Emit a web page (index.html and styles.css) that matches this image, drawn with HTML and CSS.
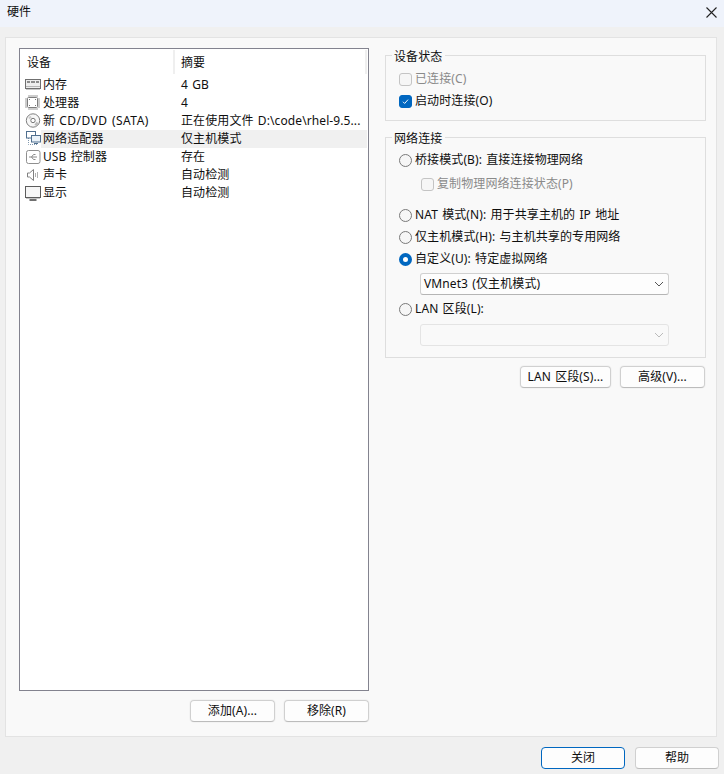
FILE: index.html
```html
<!DOCTYPE html>
<html lang="zh">
<head>
<meta charset="utf-8">
<title>硬件</title>
<link rel="stylesheet" href="styles.css">
</head>
<body>
<div class="window">
  <header class="titlebar">
    <span>硬件</span>
    <svg class="close-x" viewBox="0 0 11 11"><path d="M.5.5l10 10M10.500.5l-10 10"/></svg>
  </header>
  <main class="panel">
    <section class="left">
      <div class="list">
        <div class="head"><span class="h1">设备</span><span class="h2">摘要</span></div>
        <div class="row">
          <svg class="ico" viewBox="0 0 16 18"><rect x=".5" y="3.500" width="15" height="9" fill="#ededed" stroke="#6f6f6f"/><path d="M2 6h3M6 6h4M11 6h3" stroke="#8c8c8c" stroke-width="2"/><path d="M1 10.500h14" stroke="#b5b5b5"/><path d="M1 13.500h14" stroke="#c8c8c8"/></svg>
          <span class="name">内存</span><span class="sum">4 GB</span>
        </div>
        <div class="row">
          <svg class="ico" viewBox="0 0 16 18"><rect x="2.500" y="3.500" width="10" height="10" rx="1" fill="#fff" stroke="#7d7d7d"/><path d="M4 1v2M6 1v2M8 1v2M10 1v2M12 1v2M4 14v2M6 14v2M8 14v2M10 14v2M12 14v2M0 5h2M0 7h2M0 9h2M0 11h2M0 13h2M13 5h2M13 7h2M13 9h2M13 11h2M13 13h2" stroke="#9a9a9a"/><path d="M4 5h1v1H4zM10 11h1v1h-1zM4 11h1v1H4zM10 5h1v1h-1z" fill="#777"/></svg>
          <span class="name">处理器</span><span class="sum">4</span>
        </div>
        <div class="row">
          <svg class="ico" viewBox="0 0 16 18"><circle cx="8" cy="8.500" r="6.700" fill="#f7f7f7" stroke="#808080"/><path d="M10.500 13.500l2-3" stroke="#bbb" stroke-width="2.500"/><path d="M4 6.500l2-2" stroke="#ccc" stroke-width="2"/><circle cx="8" cy="8.500" r="2.200" fill="#fff" stroke="#777"/></svg>
          <span class="name">新 <span class="wide-latin">CD/DVD (SATA)</span></span><span class="sum">正在使用文件 D:\code\rhel-9.5...</span>
        </div>
        <div class="row selected">
          <svg class="ico" viewBox="0 0 16 18"><path d="M3.500 8v6.500h9" fill="none" stroke="#7f97ad" stroke-dasharray="1 1"/><rect x="1.500" y="1.500" width="9" height="6.500" fill="#fff" stroke="#4f6f8f"/><rect x="6.500" y="5.500" width="9" height="6.500" fill="#eaf2f9" stroke="#4f6f8f"/><path d="M9 13.500h4" stroke="#4f6f8f"/></svg>
          <span class="name">网络适配器</span><span class="sum">仅主机模式</span>
        </div>
        <div class="row">
          <svg class="ico" viewBox="0 0 16 18"><rect x="1.500" y="2.500" width="13.500" height="13" rx="2" fill="#fff" stroke="#8f8f8f"/><path d="M4 9h8M6.500 9l2-2.500h2M6.500 9l2 2.500h2" fill="none" stroke="#8a8a8a"/></svg>
          <span class="name">USB 控制器</span><span class="sum">存在</span>
        </div>
        <div class="row">
          <svg class="ico" viewBox="0 0 16 18"><path d="M2.500 7v4h2l4 3.500v-11l-4 3.500z" fill="#fff" stroke="#808080"/><path d="M10.500 7v4M12.500 6v6" stroke="#b0b0b0"/></svg>
          <span class="name">声卡</span><span class="sum">自动检测</span>
        </div>
        <div class="row">
          <svg class="ico" viewBox="0 0 16 18"><rect x=".5" y="2.500" width="15" height="11" fill="#f6f6f6" stroke="#5c5c5c"/><path d="M1 14.500h14" stroke="#c4c4c4"/><path d="M4.500 16h7" stroke="#6f6f6f" stroke-width="2"/></svg>
          <span class="name">显示</span><span class="sum">自动检测</span>
        </div>
      </div>
      <div class="actions list-actions">
        <button class="btn wide">添加(A)...</button>
        <button class="btn wide">移除(R)</button>
      </div>
    </section>
    <section class="right">
      <fieldset class="group status">
        <legend>设备状态</legend>
        <label class="opt disabled"><span class="box"></span>已连接(C)</label>
        <label class="opt"><span class="box checked"><svg viewBox="0 0 13 13"><path d="M3.500 6.800l2 2 4-4.500"/></svg></span>启动时连接(O)</label>
      </fieldset>
      <fieldset class="group net">
        <legend>网络连接</legend>
        <label class="opt"><span class="radio"></span>桥接模式(B): 直接连接物理网络</label>
        <label class="opt sub disabled"><span class="box"></span>复制物理网络连接状态(P)</label>
        <label class="opt gap"><span class="radio"></span>NAT 模式(N): 用于共享主机的 IP 地址</label>
        <label class="opt"><span class="radio"></span>仅主机模式(H): 与主机共享的专用网络</label>
        <label class="opt"><span class="radio on"></span>自定义(U): 特定虚拟网络</label>
        <div class="select"><span>VMnet3 (仅主机模式)</span><svg viewBox="0 0 10 6"><path d="M1 1l4 4 4-4"/></svg></div>
        <label class="opt"><span class="radio"></span>LAN 区段(L):</label>
        <div class="select off"><span></span><svg viewBox="0 0 10 6"><path d="M1 1l4 4 4-4"/></svg></div>
      </fieldset>
      <div class="actions right-actions">
        <button class="btn lan">LAN 区段(S)...</button>
        <button class="btn adv">高级(V)...</button>
      </div>
    </section>
  </main>
  <footer class="footer">
    <button class="btn close">关闭</button>
    <button class="btn close plain">帮助</button>
  </footer>
</div>
</body>
</html>
```
FILE: styles.css
```css
* { box-sizing: border-box; }
html, body { margin: 0; height: 100%; }
body {
  font: 12px/18px "Noto Sans", "Noto Sans CJK SC", sans-serif;
  color: #0f0f0f;
  background: #f0f0f0;
  word-spacing: 1px;
  letter-spacing: .1px;
}
.window { width: 724px; height: 774px; display: flex; flex-direction: column; overflow: hidden; }
.titlebar {
  height: 27px; flex: none; background: #eff3fb;
  display: flex; align-items: center; justify-content: space-between;
  padding: 0 7px 4px 7px;
}
.close-x { width: 11px; height: 11px; fill: none; stroke: #222; stroke-width: 1.100; margin-top: 2px; }
.panel {
  height: 700px; flex: none; margin: 10px 7px 0 5px;
  background: #f9f9f9; border: 1px solid #e3e3e3;
  display: flex; padding: 0 10px 0 13px; gap: 16px;
}
.left { width: 350px; flex: none; display: flex; flex-direction: column; }
.right { flex: 1; display: flex; flex-direction: column; padding-top: 7px; }
.list { height: 643px; margin-top: 10px; background: #fff; border: 1px solid #83838f; padding: 1px; }
.head { height: 26px; display: flex; align-items: flex-start; }
.head span { height: 24px; display: block; line-height: 26px; border-right: 2px solid #efefef; padding-left: 6px; }
.h1 { width: 154px; }
.h2 { width: 192px; }
.row { height: 18px; display: flex; align-items: center; }
.ico { width: 16px; height: 18px; flex: none; margin-left: 4px; fill: none; }
.name { width: 140px; flex: none; padding-left: 2px; height: 18px; }
.sum { flex: 1; height: 18px; white-space: nowrap; }
.wide-latin { letter-spacing: .45px; }
.selected .name, .selected .sum { background: #f0f0f0; }
.actions { display: flex; justify-content: flex-end; }
.list-actions { gap: 9px; margin-top: 9px; }
.btn {
  font: inherit; letter-spacing: inherit; word-spacing: inherit; color: inherit; height: 22px; padding: 0;
  background: #fdfdfd; border: 1px solid #d0d0d0; border-bottom-color: #bcbcbc; border-radius: 4px;
  box-shadow: 0 0 0 1px #f3f3f3;
}
.wide { width: 85px; }
.lan { width: 91px; }
.adv { width: 85px; }
.right-actions { gap: 9px; margin-top: 8px; padding-right: 1px; }
.close { width: 84px; border: 1px solid #0067c0; box-shadow: none; }
.plain { border: 1px solid #d0d0d0; border-bottom-color: #bcbcbc; }
.footer { flex: 1; display: flex; justify-content: flex-end; gap: 10px; padding: 10px 5px 0 0; }
.group { margin: 0; border: 1px solid #dedede; padding: 0 0 0 13px; min-width: 0; }
.group legend { padding: 4px 3px 0 2px; margin-left: -7px; line-height: 16px; }
.status { height: 76px; margin-bottom: 6px; }
.net { height: 231px; }
.opt { display: flex; align-items: center; height: 22px; gap: 3px; }
.status .opt:first-of-type { margin-top: 3px; }
.net .opt:first-of-type { margin-top: 2px; }
.sub { margin: 2px 0 0 22px; }
.gap { margin-top: 9px; }
.disabled { color: #8a8a8a; }
.box { width: 13px; height: 13px; flex: none; border: 1px solid #c4c4c4; border-radius: 3px; background: #f6f6f6; display: block; }
.checked { background: #0067c0; border-color: #0067c0; }
.checked svg { display: block; width: 11px; height: 11px; fill: none; stroke: #fff; stroke-width: 1.100; }
.radio { width: 13px; height: 13px; flex: none; border: 1px solid #7a7a7a; border-radius: 50%; background: #f6f6f6; display: block; }
.on { border: 4px solid #0067c0; background: #fff; }
.select {
  width: 249px; height: 22px; margin: 3px 0 3px 21px; background: #fdfdfd;
  border: 1px solid #d0d0d0; border-bottom-color: #b5b5b5; border-radius: 3px;
  display: flex; align-items: center; justify-content: space-between; padding: 0 4px 0 3px;
}
.select svg { width: 10px; height: 6px; fill: none; stroke: #555; stroke-width: 1; }
.select.off { margin-top: 4px; background: #f9f9f9; border-color: #e4e4e4; }
.off svg { stroke: #bbb; }
```
